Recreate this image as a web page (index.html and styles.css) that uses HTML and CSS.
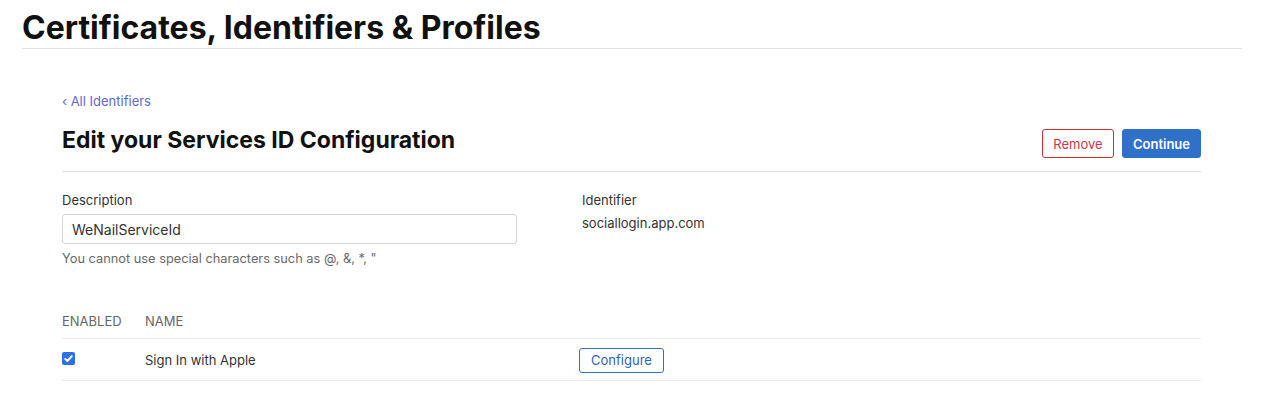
FILE: index.html
```html
<!DOCTYPE html>
<html>
<head>
<meta charset="utf-8">
<link rel="stylesheet" href="styles.css">
</head>
<body>
<header class="page-header">
  <h1 class="page-title">Certificates, Identifiers &amp; Profiles</h1>
</header>
<main class="content">
  <a class="back-link" href="#">‹ All Identifiers</a>
  <div class="section-head">
    <h2 class="section-title">Edit your Services ID Configuration</h2>
    <div class="actions">
      <button class="btn btn-remove">Remove</button>
      <button class="btn btn-continue">Continue</button>
    </div>
  </div>
  <div class="fields">
    <div class="field field-desc">
      <label class="field-label">Description</label>
      <input class="text-input" type="text" value="WeNailServiceId">
      <div class="hint">You cannot use special characters such as @, &amp;, *, "</div>
    </div>
    <div class="field">
      <div class="field-label">Identifier</div>
      <div class="field-value">sociallogin.app.com</div>
    </div>
  </div>
  <div class="table">
    <div class="row row-head">
      <div class="col-enabled">ENABLED</div>
      <div class="col-name">NAME</div>
      <div class="col-action"></div>
    </div>
    <div class="row row-body">
      <div class="col-enabled"><span class="checkbox"><svg viewBox="0 0 13 13" width="13" height="13"><path d="M3.2 6.8 L5.4 9 L9.8 4.2" fill="none" stroke="#fff" stroke-width="1.9" stroke-linecap="round" stroke-linejoin="round"/></svg></span></div>
      <div class="col-name">Sign In with Apple</div>
      <div class="col-action"><button class="btn btn-config">Configure</button></div>
    </div>
  </div>
</main>
</body>
</html>
```

FILE: styles.css
```css
* { box-sizing: border-box; }
body {
  margin: 0;
  background: #fff;
  font-family: Inter, "Noto Sans", "Liberation Sans", sans-serif;
  color: #333;
}
.page-header {
  margin: 0 32px 0 22px;
  border-bottom: 1px solid #e3e3e3;
  padding-top: 9px;
  height: 49px;
}
.page-title {
  margin: 0;
  font-size: 32px;
  line-height: 38px;
  font-weight: 700;
  color: #111;
}
.content {
  margin: 0 73px 0 62px;
  padding-top: 44px;
}
.back-link {
  display: block;
  font-size: 13px;
  line-height: 16px;
  color: #5b6ad6;
  text-decoration: none;
}
.section-head {
  display: flex;
  justify-content: space-between;
  align-items: flex-start;
  border-bottom: 1px solid #dcdcdc;
  height: 63px;
  padding-top: 18px;
}
.section-title {
  margin: 0;
  font-size: 23px;
  line-height: 26px;
  font-weight: 700;
  color: #111;
}
.actions {
  display: flex;
  gap: 8px;
  padding-top: 2px;
}
.btn {
  font-family: inherit;
  font-size: 13px;
  border-radius: 3px;
  height: 29px;
  cursor: pointer;
}
.btn-remove {
  background: #fff;
  border: 1px solid #d42f2f;
  color: #d0354a;
  width: 72px;
}
.btn-continue {
  background: #2f70c9;
  border: 1px solid #2f70c9;
  color: #fff;
  font-weight: 600;
  width: 79px;
}
.fields {
  display: grid;
  grid-template-columns: 520px 1fr;
  padding-top: 20px;
}
.field-label {
  display: block;
  font-size: 13px;
  line-height: 17px;
  color: #333;
}
.text-input {
  display: block;
  margin-top: 5px;
  width: 455px;
  height: 30px;
  border: 1px solid #d4d4d4;
  border-radius: 3px;
  padding: 0 9px;
  font-family: inherit;
  font-size: 14px;
  color: #333;
}
.hint {
  margin-top: 6px;
  font-size: 12.8px;
  line-height: 17px;
  color: #6a6a6a;
}
.field-value {
  margin-top: 6px;
  font-size: 13px;
  line-height: 17px;
  color: #333;
}
.table {
  margin-top: 46px;
}
.row {
  display: flex;
  align-items: center;
  border-bottom: 1px solid #ececec;
  font-size: 13px;
}
.row-head {
  height: 26px;
  align-items: flex-start;
  color: #666;
}
.row-body {
  height: 42px;
  color: #333;
}
.col-enabled { width: 83px; }
.col-name { width: 434px; }
.col-action { flex: 1; }
.checkbox {
  display: block;
  width: 13px;
  height: 13px;
  border-radius: 2px;
  background: #2f6fe6;
  margin-top: -3px;
}
.checkbox svg { display: block; }
.btn-config {
  height: 25px;
  width: 85px;
  background: #fff;
  border: 1px solid #2f70c9;
  color: #2f5fbf;
  font-size: 13px;
  margin-top: 1px;
}
```
